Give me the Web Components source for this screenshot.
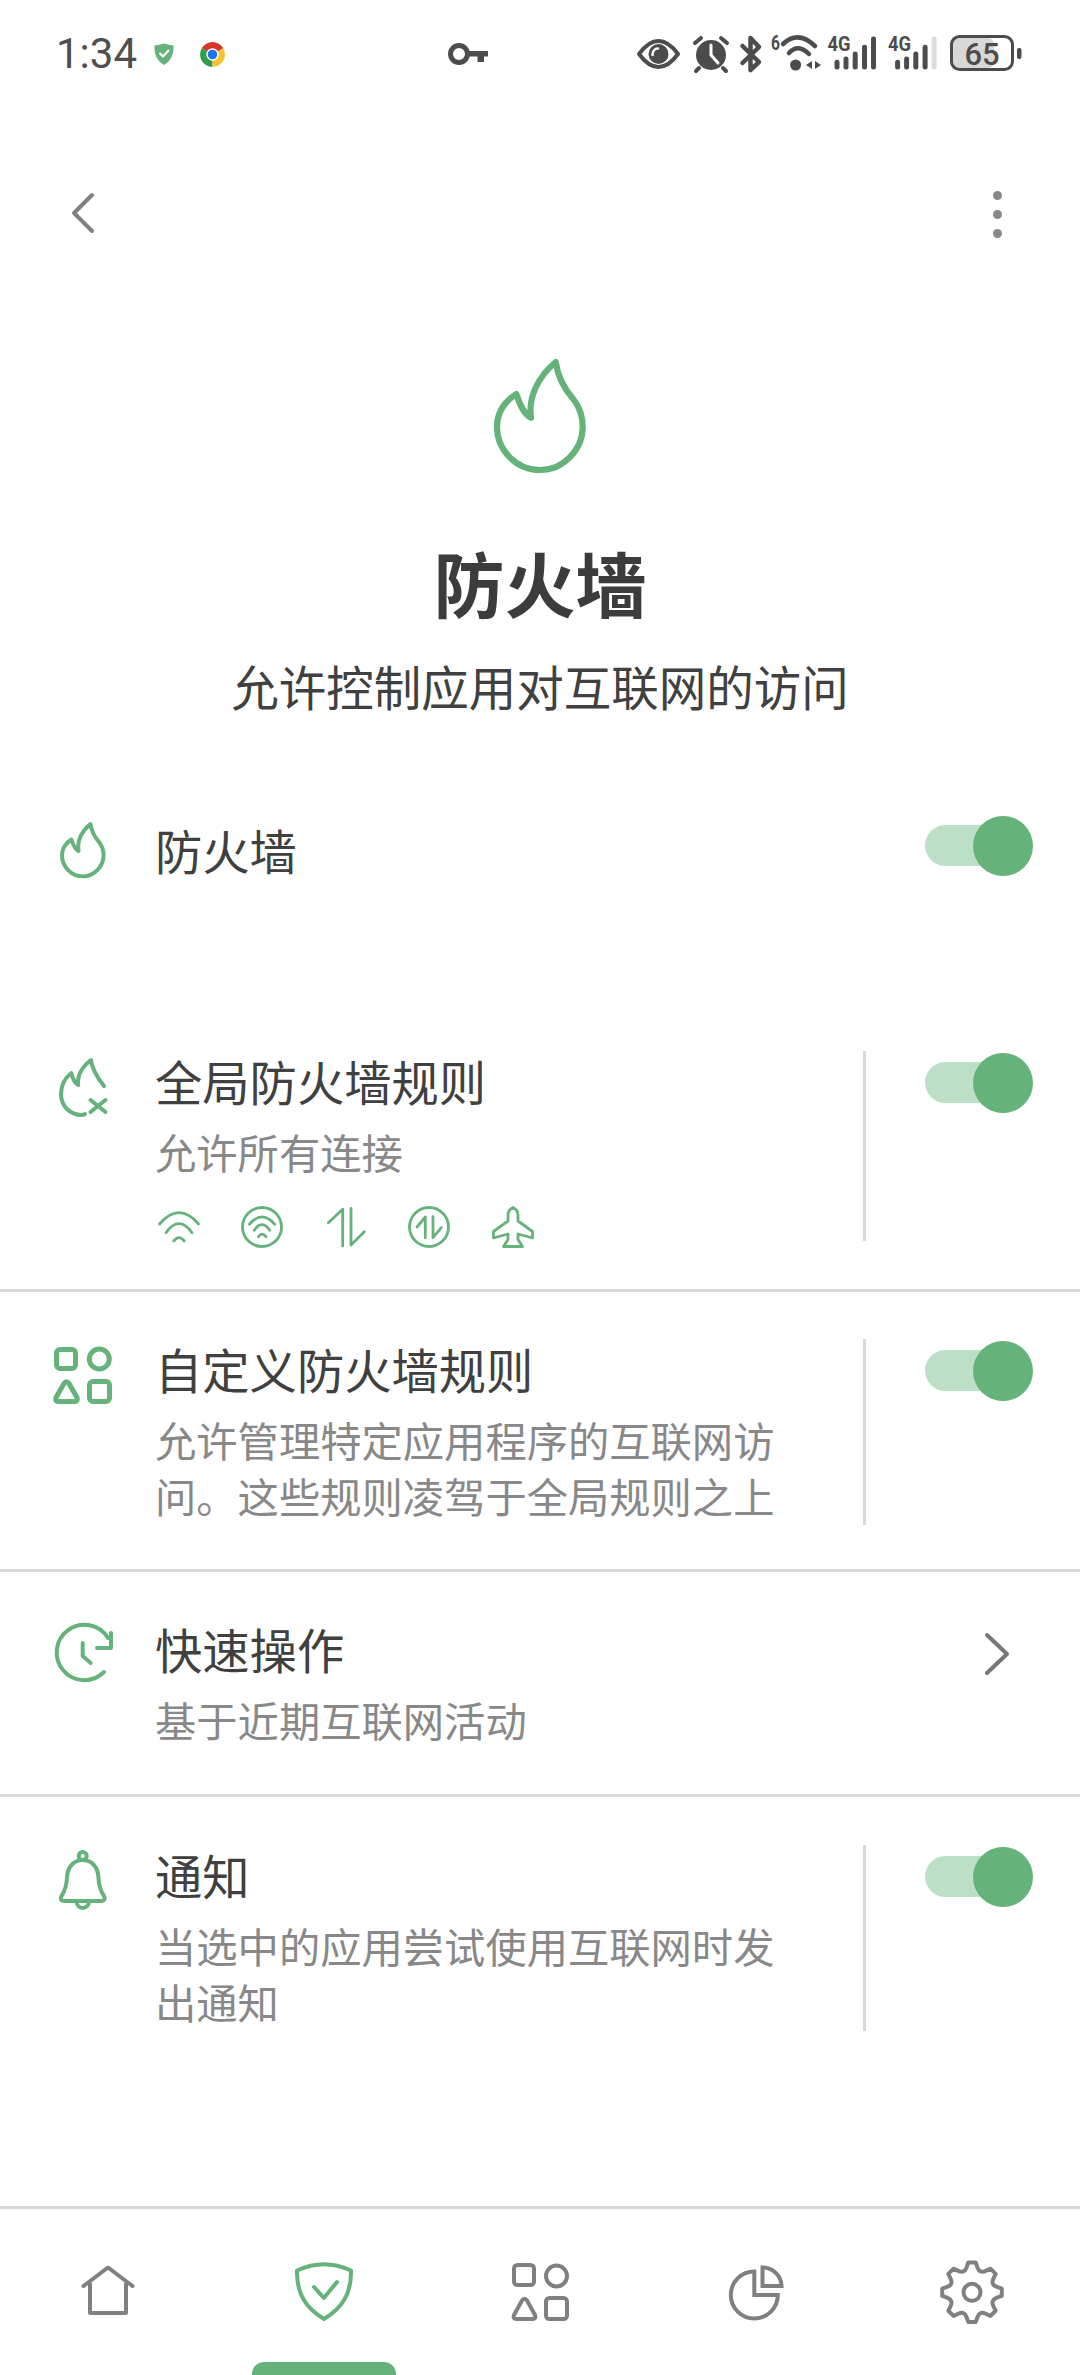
<!DOCTYPE html>
<html lang="zh-CN">
<head>
<meta charset="utf-8">
<title>防火墙</title>
<style>
html,body{margin:0;padding:0;background:#fff}
body{width:1080px;height:2375px;overflow:hidden;display:flex;flex-direction:column;font-family:"Noto Sans CJK SC","Noto Sans",sans-serif;color:#404040}
.grow{flex:1 1 auto}
</style>
</head>
<body>
<status-bar></status-bar>
<app-bar></app-bar>
<fw-hero title="防火墙" subtitle="允许控制应用对互联网的访问"></fw-hero>
<fw-row icon="flame-s" title="防火墙" style="--pb:114px;--bw:0" compact><fw-toggle slot="aside"></fw-toggle></fw-row>
<fw-row icon="flame-x" title="全局防火墙规则" sub="允许所有连接" divider style="--pb:48px">
  <conn-icons></conn-icons>
  <fw-toggle slot="aside"></fw-toggle>
</fw-row>
<fw-row icon="apps" title="自定义防火墙规则" sub="允许管理特定应用程序的互联网访问。这些规则凌驾于全局规则之上" divider style="--pb:44px"><fw-toggle slot="aside"></fw-toggle></fw-row>
<fw-row icon="clock" title="快速操作" sub="基于近期互联网活动" style="--pb:45px"><x-icon slot="aside" name="chev" w="108" h="60"></x-icon></fw-row>
<fw-row icon="bell" title="通知" sub="当选中的应用尝试使用互联网时发出通知" divider style="--pb:0px;--pt:48px;--bw:0"><fw-toggle slot="aside"></fw-toggle></fw-row>
<div class="grow"></div>
<bottom-nav></bottom-nav>

<script>
const G='#65b27a', N='#808080';
function gearPath(cx,cy){
  const p=(r,d)=>{const a=(d-90)*Math.PI/180;return (cx+r*Math.cos(a)).toFixed(2)+' '+(cy+r*Math.sin(a)).toFixed(2)};
  let s='';
  for(let i=0;i<8;i++){
    const a=i*45;
    s+=(i?'L':'M')+p(30,a-7)+' L'+p(30,a+7)+' L'+p(25,a+13)+' Q'+p(20.5,a+22.5)+' '+p(25,a+32);
  }
  return s+'Z';
}
const sg=(vw,vh,body,w,h)=>`<svg xmlns="http://www.w3.org/2000/svg" width="${w||vw}" height="${h||vh}" viewBox="0 0 ${vw} ${vh}" fill="none" stroke-linecap="round" stroke-linejoin="round" style="display:block;overflow:visible">${body}</svg>`;
const FLAME='M41 62.7C38 42 48 22 65.7 7C68 24 76 36 84 45C90 53 92.7 62 92.7 71.7C92.7 95 73 115 50 115C26 115 7 95 7 71.7C7 58 14 47 26.3 39C29 47 33 59 41 62.7Z';
const ICONS={
  'flame-l':()=>sg(100,125,`<path d="${FLAME}" stroke="${G}" stroke-width="6.200"/>`),
  'flame-s':()=>sg(72,72,`<g transform="translate(12.6 2.6) scale(.485)"><path d="${FLAME}" stroke="${G}" stroke-width="8.200"/></g>`),
  'flame-x':()=>sg(72,72,`<g stroke="${G}" stroke-width="4"><path d="M39 65C37.500 65.800 36.500 66 35.700 66C24 66 15 57 15 45C15 36 19 29 25.300 24C26.500 29 28.500 34 32.200 36C31 26 36 18 45 11C46 20 50 27 58 37"/><path d="M44.500 51L59.500 63M59.500 51L44.500 63"/></g>`),
  'apps':()=>sg(72,72,`<g stroke="${G}" stroke-width="5"><rect x="10.500" y="12.500" width="19" height="19" rx="3.500"/><circle cx="53.300" cy="22" r="10"/><path d="M18 46.500Q20.500 43 23 46.500L31 60.500Q32.500 64.500 28.500 64.500H12.500Q8.500 64.500 10 60.500Z"/><rect x="43.500" y="44.500" width="20" height="20" rx="3.500"/></g>`),
  'clock':()=>sg(72,72,`<g stroke="${G}" stroke-width="4"><path d="M58 55A27.700 27.700 0 1 1 62 21"/><path d="M65 16V31H51"/><path d="M36.700 26V39L44.700 46"/></g>`),
  'bell':()=>sg(72,72,`<g stroke="${G}" stroke-width="4"><circle cx="36.700" cy="13" r="4"/><path d="M36.700 17C27 17 21.500 25 21 34C20.700 42 19 48 15.500 53C14 55.500 15 58 18 58H55.400C58.400 58 59.400 55.500 58 53C54.500 48 52.700 42 52.400 34C52 25 46.400 17 36.700 17Z"/><path d="M30.500 58.500C31 67 42.400 67 43 58.500"/></g>`),
  'chev':()=>sg(108,60,`<path d="M62 14L82 33L62 52" stroke="#777" stroke-width="4"/>`),
  'wifi':()=>sg(42,42,`<g stroke="${G}" stroke-width="2.800"><path d="M1.500 18Q21 -4.600 40.500 18"/><path d="M8 26.700Q21 8.700 34 26.700"/><path d="M15.700 35Q21 28.400 26.300 35"/></g>`),
  'wifi-c':()=>sg(42,42,`<g stroke="${G}" stroke-width="2.800"><circle cx="21" cy="21" r="19.500"/><path d="M8.300 18.300Q21 3.500 33.700 18.300"/><path d="M13.300 24.300Q21 13 28.700 24.300"/><path d="M17.300 30.700Q21 25.500 25 30.700"/></g>`),
  'data':()=>sg(42,42,`<g stroke="${G}" stroke-width="2.800"><path d="M3.300 16.700L17.700 3.300V40"/><path d="M26 2.300V39L39.300 25.700"/></g>`),
  'data-c':()=>sg(42,42,`<g stroke="${G}" stroke-width="2.800"><circle cx="21" cy="21" r="19.500"/><path d="M9 21L17.300 11V31.700"/><path d="M25 10.700V31.700L33.300 21.700"/></g>`),
  'plane':()=>sg(42,42,`<path d="M21 1.500Q16 4 16 9V15L1.500 25.500V32L16 28V33.500L11.500 40.500H30.500L26 33.500V28L40.500 32V25.500L26 15V9Q26 4 21 1.500Z" stroke="${G}" stroke-width="2.800"/>`),
  'home':()=>sg(72,72,`<g stroke="${N}" stroke-width="4"><path d="M11.500 30L36 11.500L60.500 30"/><path d="M18 28V57H54V28"/></g>`),
  'shield':()=>sg(72,72,`<g stroke="${G}" stroke-width="4"><path d="M9 14.500Q36 2 63 14.500C63.500 38 54 52 36 63C18 52 8.500 38 9 14.500Z"/><path d="M26 31L35.800 42L49 26"/></g>`),
  'nav-apps':()=>sg(72,72,`<g stroke="${N}" stroke-width="4"><rect x="10" y="9" width="20" height="20" rx="3.500"/><circle cx="52.500" cy="20" r="10.500"/><path d="M18 44.500Q20.500 41 23 44.500L31 59Q32.500 63 28.500 63H12.500Q8.500 63 10 59Z"/><rect x="42" y="42" width="21" height="21" rx="3.500"/></g>`),
  'pie':()=>sg(72,72,`<g stroke="${N}" stroke-width="4" stroke-linecap="butt" stroke-linejoin="miter"><path d="M34.300 15.500V39H57.800A23.500 23.500 0 1 1 34.300 15.500Z"/><path d="M42.500 30V11.500A19 19 0 0 1 61.500 30Z"/></g>`),
  'gear':()=>sg(72,72,`<g stroke="${N}" stroke-width="4"><path d="${gearPath(36,36.3)}"/><circle cx="36" cy="36.300" r="8.500"/></g>`)
};
class XIcon extends HTMLElement{
  constructor(){super();this.attachShadow({mode:'open'});}
  connectedCallback(){
    const f=ICONS[this.getAttribute('name')];
    this.shadowRoot.innerHTML=`<style>:host{display:block;flex:none}</style>${f?f():''}`;
  }
}
customElements.define('x-icon',XIcon);

class StatusBar extends HTMLElement{
  constructor(){
    super();
    const C='#4c4c4c';
    const bars=(x,last)=>[[0,30],[9,26.7],[18.200,21.700],[27.500,15],[36.500,6.700]].map((b,i)=>`<path d="M${x+b[0]} ${b[1]+2.200}V37" stroke="${i==4&&last?'#dcdcdc':C}" stroke-width="5"/>`).join('');
    const g4=x=>`<text x="${x}" y="21" font-family="Roboto,sans-serif" font-weight="700" font-size="20" fill="${C}" stroke="none" textLength="23" lengthAdjust="spacingAndGlyphs">4G</text>`;
    this.attachShadow({mode:'open'}).innerHTML=`<style>
    :host{display:flex;align-items:center;height:108px;flex:none;padding:0 59px 0 56px;box-sizing:border-box;color:#4f4f4f;font-family:Roboto,"Noto Sans",sans-serif}
    .t{font-size:42px;width:88px;line-height:48px;white-space:nowrap}
    .sh{margin-left:10px}.ch{margin-left:26px}.key{margin-left:223px}.r{margin-left:auto}
    svg{flex:none}
    </style>
    <span class="t">1:34</span>
    <span class="sh">${sg(20,22,`<path d="M10 .5Q15 2 19.500 2.500C20 11 17 18 10 22C3 18 0 11 .5 2.500Q5 2 10 .5Z" fill="${G}"/><path d="M6 10.500L9 13.500L14.500 7.500" stroke="#fff" stroke-width="2"/>`)}</span>
    <span class="ch">${sg(25,25,`<path d="M12.500 12.500L1.700 6.300A12.500 12.500 0 0 1 23.300 6.300Z" fill="#d9362b"/><path d="M12.500 12.500L12.500 25A12.500 12.500 0 0 1 1.700 6.300Z" fill="#2f9e4a"/><path d="M12.500 12.500L23.300 6.300A12.500 12.500 0 0 1 12.500 25Z" fill="#f5c531"/><circle cx="12.500" cy="12.500" r="6.200" fill="#fff"/><circle cx="12.500" cy="12.500" r="4.800" fill="#1f73e8"/>`)}</span>
    <span class="key">${sg(40,24,`<circle cx="11" cy="12" r="8.500" stroke="${C}" stroke-width="5"/><path d="M20 9H40V14.500H36V20H29.500V14.500H20Z" fill="${C}" stroke="none"/>`)}</span>
    <span class="r">${sg(384,48,`
      <path d="M2 24C10 13 16 11 21.500 11C27 11 33 13 41 24C33 35 27 37 21.500 37C16 37 10 35 2 24Z" stroke="${C}" stroke-width="4"/><circle cx="21.500" cy="24" r="10" fill="${C}"/><path d="M15.500 25C15.500 21 18 18.500 21 18.500" stroke="#fff" stroke-width="2.500"/>
      <circle cx="74" cy="25" r="15" fill="${C}"/><path d="M74 15V25L81 33" stroke="#fff" stroke-width="3"/><path d="M58 13L64 8M90 13L84 8M62 38L59 41M86 38L89 41" stroke="${C}" stroke-width="4"/>
      <path d="M105.500 16L122 32L113.500 40V8L122 17L105.500 33" stroke="${C}" stroke-width="4.500"/>
      <text x="134" y="20" font-family="Roboto,sans-serif" font-weight="700" font-size="20" fill="${C}" stroke="none" textLength="9" lengthAdjust="spacingAndGlyphs">6</text>
      <g stroke="${C}" stroke-width="4.500"><path d="M146 14Q161 0 178 16"/><path d="M152 23Q161 13 172 24"/></g><circle cx="158.600" cy="35" r="5.500" fill="${C}"/><path d="M169 35L175 31V39ZM178 31L184 35L178 39Z" fill="${C}"/>
      ${g4(190.600)}${bars(200,false)}
      ${g4(251)}${bars(260.600,true)}
      <rect x="316" y="8" width="41" height="30" rx="6" fill="#d8d8d8"/>
      <rect x="314.500" y="6.500" width="61" height="33" rx="8" stroke="${C}" stroke-width="3"/>
      <text x="345" y="35" text-anchor="middle" font-family="Roboto,sans-serif" font-weight="500" font-size="31" fill="${C}" stroke="none">65</text>
      <rect x="380" y="18" width="4.500" height="11" rx="2" fill="${C}"/>
    `)}</span>`;
  }
}
customElements.define('status-bar',StatusBar);

class AppBar extends HTMLElement{
  constructor(){
    super();
    this.attachShadow({mode:'open'}).innerHTML=`<style>
    :host{display:flex;align-items:center;justify-content:space-between;height:212px;flex:none;padding:0 78px 0 70px;box-sizing:border-box}
    .d{display:flex;flex-direction:column;gap:10px}
    .d i{display:block;width:9px;height:9px;border-radius:50%;background:#888}
    </style>
    ${sg(26,42,`<path d="M22 2L4 20L22 38" stroke="#808080" stroke-width="4"/>`)}
    <div class="d"><i></i><i></i><i></i></div>`;
  }
}
customElements.define('app-bar',AppBar);

class FwHero extends HTMLElement{
  constructor(){super();this.attachShadow({mode:'open'});}
  connectedCallback(){
    this.shadowRoot.innerHTML=`<style>
    :host{display:flex;flex-direction:column;align-items:center;flex:none;padding:35px 0 52px}
    h1{margin:56px 0 0;font-size:71px;line-height:90px;font-weight:700;color:#3c3c3c}
    p{margin:25px 0 0;font-size:47.500px;line-height:70px;color:#404040}
    </style><x-icon name="flame-l"></x-icon><h1>${this.getAttribute('title')}</h1><p>${this.getAttribute('subtitle')}</p>`;
  }
}
customElements.define('fw-hero',FwHero);

class FwRow extends HTMLElement{
  constructor(){super();this.attachShadow({mode:'open'});}
  connectedCallback(){
    const sub=this.getAttribute('sub');
    this.shadowRoot.innerHTML=`<style>
    :host{display:grid;grid-template-columns:155px 1fr 217px;flex:none;box-sizing:border-box;padding:var(--pt,47px) 0 var(--pb,45px);border-bottom:var(--bw,3px) solid #d9d9d9}
    .ic{margin:-2px 0 0 46px;width:72px;height:72px}
    .txt{padding:0 65px 2px 0;min-width:0}
    .ti{font-size:47.300px;line-height:64px;margin-top:-2px;color:#404040}
    .su{font-size:41.300px;line-height:56px;margin-top:10px;color:#888}
    .as{box-sizing:border-box;padding:2px 0 0 59px;border-left:3px solid transparent}
    :host([divider]) .as{border-left-color:#d9d9d9}
    :host([compact]) .as{padding-top:0;margin-top:-4px}
    </style>
    <div class="ic"><x-icon name="${this.getAttribute('icon')}"></x-icon></div>
    <div class="txt"><div class="ti">${this.getAttribute('title')}</div>${sub?`<div class="su">${sub}</div>`:''}<slot></slot></div>
    <div class="as"><slot name="aside"></slot></div>`;
  }
}
customElements.define('fw-row',FwRow);

class FwToggle extends HTMLElement{
  constructor(){
    super();
    this.attachShadow({mode:'open'}).innerHTML=`<style>
    :host{display:block;position:relative;width:108px;height:60px}
    .t{position:absolute;left:0;top:9px;width:90px;height:41px;border-radius:21px;background:#bbdfc7}
    .k{position:absolute;right:0;top:0;width:60px;height:60px;border-radius:50%;background:${G}}
    </style><div class="t"></div><div class="k"></div>`;
  }
}
customElements.define('fw-toggle',FwToggle);

class ConnIcons extends HTMLElement{
  constructor(){
    super();
    this.attachShadow({mode:'open'}).innerHTML=`<style>
    :host{display:flex;gap:41.500px;height:42px;margin:27px 0 -9px 2.500px}
    </style>
    <x-icon name="wifi"></x-icon><x-icon name="wifi-c"></x-icon><x-icon name="data"></x-icon><x-icon name="data-c"></x-icon><x-icon name="plane"></x-icon>`;
  }
}
customElements.define('conn-icons',ConnIcons);

class BottomNav extends HTMLElement{
  constructor(){
    super();
    const item=(n,a)=>`<div class="c"><x-icon name="${n}"></x-icon>${a?'<i></i>':''}</div>`;
    this.attachShadow({mode:'open'}).innerHTML=`<style>
    :host{display:grid;grid-template-columns:repeat(5,1fr);height:169px;flex:none;box-sizing:border-box;border-top:3px solid #d9d9d9}
    .c{display:flex;flex-direction:column;align-items:center;padding-top:47px}
    i{display:block;width:144px;height:13px;border-radius:12px 12px 0 0;background:${G};margin-top:auto}
    </style>${item('home')}${item('shield',1)}${item('nav-apps')}${item('pie')}${item('gear')}`;
  }
}
customElements.define('bottom-nav',BottomNav);
</script>
</body>
</html>
